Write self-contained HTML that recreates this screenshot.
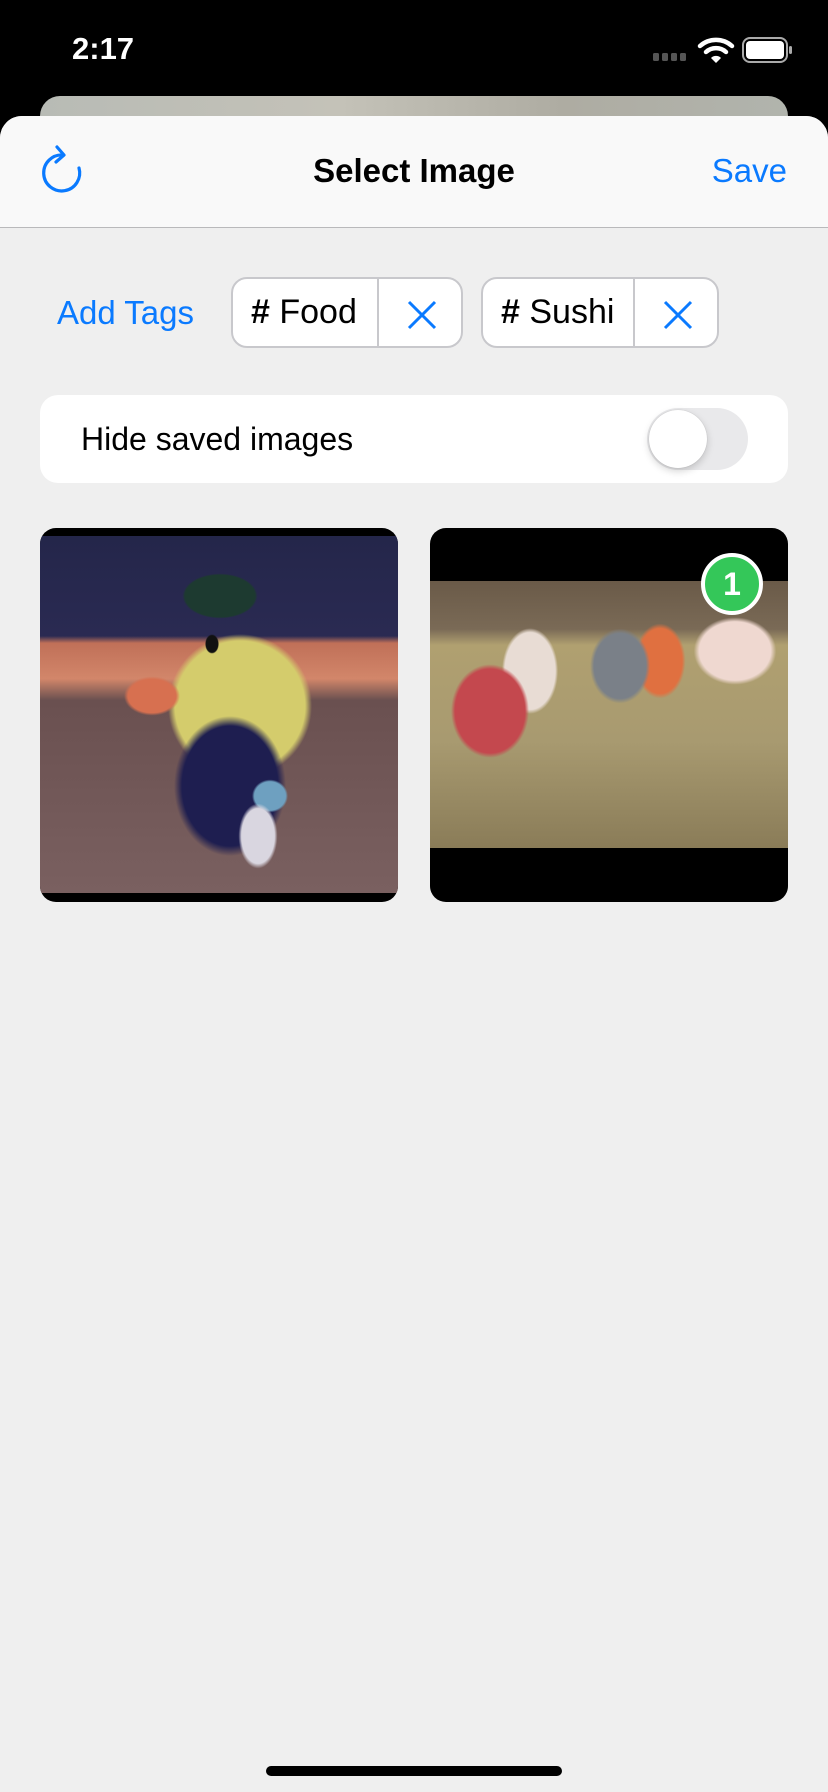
<!DOCTYPE html>
<html><head><meta charset="utf-8"><style>
*{margin:0;padding:0;box-sizing:border-box}
body{width:828px;height:1792px;background:#000;position:relative;overflow:hidden;font-family:"Liberation Sans",sans-serif}
.abs{position:absolute}
.time{left:72px;top:31px;color:#fff;font-size:31px;font-weight:bold}
.back{left:40px;top:96px;width:748px;height:60px;border-radius:20px;background:linear-gradient(90deg,#b8bbb5,#c4c2b8 40%,#aeaca2 70%,#b1b4ad)}
.sheet{left:0;top:116px;width:828px;height:1676px;background:#efefef;border-radius:22px 22px 0 0;overflow:hidden}
.nav{left:0;top:0;width:828px;height:112px;background:#f9f9f9;border-bottom:1px solid #b9b9bb}
.title{left:0;width:828px;top:36px;text-align:center;font-size:33px;font-weight:bold;color:#000}
.save{right:41px;top:36px;font-size:33px;color:#0a7aff}
.addtags{left:57px;top:178px;font-size:33px;color:#0a7aff}
.chip{top:161px;height:71px;background:#fff;border:2px solid #c8c8cc;border-radius:16px}
.chip .t{position:absolute;left:18px;top:14px;font-size:34px;color:#000}
.chip .t b{font-weight:bold}
.chip .d{position:absolute;top:0;bottom:0;width:2px;background:#c8c8cc}
.row{left:40px;top:279px;width:748px;height:88px;background:#fff;border-radius:18px}
.row .t{position:absolute;left:41px;top:26px;font-size:32px;color:#000}
.tog{position:absolute;left:607px;top:13px;width:101px;height:62px;border-radius:31px;background:#e9e9eb}
.knob{position:absolute;left:2px;top:2px;width:58px;height:58px;border-radius:50%;background:#fff;box-shadow:0 3px 8px rgba(0,0,0,.18),0 0 1px rgba(0,0,0,.2)}
.card{top:412px;width:358px;height:374px;border-radius:16px;background:#000;overflow:hidden}
</style></head><body>
<div class="abs time">2:17</div>
<svg class="abs" style="left:650px;top:36px" width="145" height="30" viewBox="0 0 145 30">
<rect x="3" y="17" width="6" height="8" rx="1.5" fill="#555"/><rect x="12" y="17" width="6" height="8" rx="1.5" fill="#555"/><rect x="21" y="17" width="6" height="8" rx="1.5" fill="#555"/><rect x="30" y="17" width="6" height="8" rx="1.5" fill="#555"/>
<path d="M50 10 A24 24 0 0 1 82 10" stroke="#fff" stroke-width="4.5" fill="none" stroke-linecap="round"/>
<path d="M56 16 A15 15 0 0 1 76 16" stroke="#fff" stroke-width="4.5" fill="none" stroke-linecap="round"/>
<path d="M61 22 L66 27 L71 22 A7 7 0 0 0 61 22Z" fill="#fff"/>
<rect x="93" y="2" width="44" height="24" rx="7" stroke="#aaa" stroke-width="2" fill="none"/>
<rect x="96" y="5" width="38" height="18" rx="4" fill="#fff"/>
<rect x="139" y="10" width="3" height="8" rx="1.5" fill="#aaa"/>
</svg>
<div class="abs back"></div>
<div class="abs sheet">
 <div class="abs nav">
  <svg class="abs" style="left:0;top:0" width="100" height="100" viewBox="0 0 100 100">
   <path d="M63 39 A18 18 0 1 0 79 52" stroke="#0a7aff" stroke-width="3.2" fill="none" stroke-linecap="round"/>
   <path d="M57 31 L64 39 L56 46" stroke="#0a7aff" stroke-width="3.2" fill="none" stroke-linecap="round" stroke-linejoin="round"/>
  </svg>
  <div class="abs title">Select Image</div>
  <div class="abs save">Save</div>
 </div>
 <div class="abs addtags">Add Tags</div>
 <div class="abs chip" style="left:231px;width:232px"><div class="t"><b>#</b> Food</div><div class="d" style="left:144px"></div>
  <svg class="abs" style="left:174px;top:21px" width="30" height="30"><path d="M2 2L28 28M28 2L2 28" stroke="#0a7aff" stroke-width="3"/></svg></div>
 <div class="abs chip" style="left:481px;width:238px"><div class="t"><b>#</b> Sushi</div><div class="d" style="left:150px"></div>
  <svg class="abs" style="left:180px;top:21px" width="30" height="30"><path d="M2 2L28 28M28 2L2 28" stroke="#0a7aff" stroke-width="3"/></svg></div>
 <div class="abs row"><div class="t">Hide saved images</div><div class="tog"><div class="knob"></div></div></div>
 <div class="abs card" style="left:40px">
  <div class="abs" style="left:0;top:8px;width:358px;height:357px;background:
   radial-gradient(ellipse 10px 14px at 172px 108px,#111 60%,transparent 70%),
   radial-gradient(ellipse 40px 28px at 112px 160px,#d77050 60%,transparent 70%),
   radial-gradient(ellipse 50px 30px at 180px 60px,#1d3a30 70%,transparent 75%),
   radial-gradient(ellipse 30px 50px at 218px 300px,#d9d6e0 55%,transparent 65%),
   radial-gradient(ellipse 24px 22px at 230px 260px,#6ea0c0 65%,transparent 75%),
   radial-gradient(ellipse 80px 100px at 190px 250px,#1e1e50 60%,transparent 70%),
   radial-gradient(ellipse 100px 100px at 200px 170px,#d4cc6c 65%,transparent 72%),
   linear-gradient(180deg,#24264a 0%,#2a2a52 28%,#c07058 30%,#d2866a 40%,#6a5050 46%,#7a6060 100%)"></div>
 </div>
 <div class="abs card" style="left:430px">
  <div class="abs" style="left:0;top:53px;width:358px;height:267px;background:
   radial-gradient(ellipse 50px 60px at 60px 130px,#c4484e 70%,transparent 78%),
   radial-gradient(ellipse 36px 55px at 100px 90px,#e8dcd4 70%,transparent 78%),
   radial-gradient(ellipse 40px 50px at 190px 85px,#7a8088 65%,transparent 75%),
   radial-gradient(ellipse 34px 50px at 230px 80px,#e07040 65%,transparent 75%),
   radial-gradient(ellipse 55px 45px at 305px 70px,#efd8d0 65%,transparent 75%),
   linear-gradient(180deg,#6a5a48 0%,#7a6a56 18%,#b0a070 24%,#a89a70 60%,#8a7c58 100%)"></div>
  <div class="abs" style="left:271px;top:25px;width:62px;height:62px;border-radius:50%;background:#34c759;border:4px solid #fff;color:#fff;font-weight:bold;font-size:32px;text-align:center;line-height:54px">1</div>
 </div>
</div>
<div class="abs" style="left:266px;top:1766px;width:296px;height:10px;border-radius:5px;background:#000"></div>
</body></html>
